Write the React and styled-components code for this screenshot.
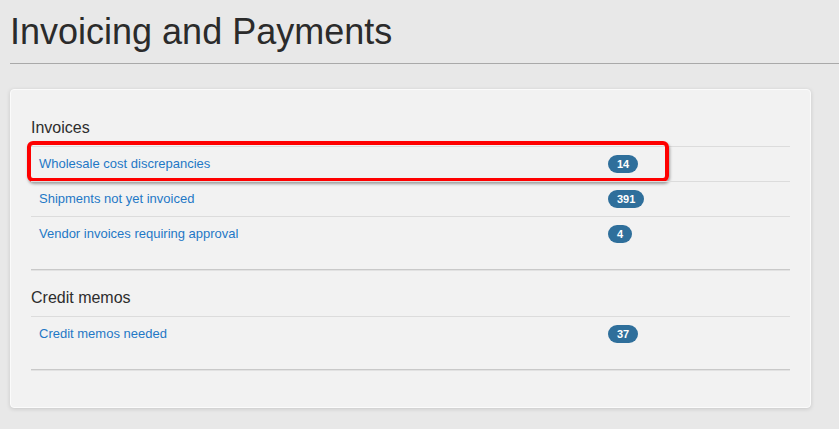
import React from 'react'
import styled, {createGlobalStyle} from 'styled-components'

const GlobalStyle = createGlobalStyle`
  html, body {
    margin: 0;
    padding: 0;
    background: #e8e8e8;
    font-family: "Liberation Sans", Arial, Helvetica, sans-serif;
  }
  * { box-sizing: border-box; }
`

// page pieces
const Page = styled.div`
  width: 839px;
  height: 429px;
  padding-left: 10px;
  overflow: hidden;
`
const Title = styled.h1`
  margin: 0;
  padding-top: 12px;
  font-size: 36px;
  line-height: 40px;
  font-weight: normal;
  color: #2b2b2b;
  letter-spacing: 0;
`
const TitleRule = styled.div`
  margin-top: 11px;
  border-top: 1px solid #a9a9a9;
`
const Card = styled.div`
  margin-top: 25px;
  width: 801px;
  padding: 11px 20px 36px;
  background: #f2f2f2;
  border: 1px solid #fbfbfb;
  border-radius: 4px;
  box-shadow: 0 1px 4px rgba(0, 0, 0, 0.14);
`
const SectionTitle = styled.h3`
  margin: 0;
  padding: 17px 0 8px;
  font-size: 16px;
  line-height: 20px;
  font-weight: normal;
  color: #2d2d2d;
`
const Row = styled.div`
  position: relative;
  display: grid;
  grid-template-columns: 569px 1fr;
  align-items: center;
  height: 35px;
  border-top: 1px solid #dcdcdc;
`
const Cell = styled.div`
  padding: 0 8px;
  display: flex;
  align-items: center;
`
const RowLink = styled.a`
  font-size: 13px;
  line-height: 16px;
  color: #1f78c6;
  text-decoration: none;
  cursor: pointer;
`
const Badge = styled.span`
  display: inline-flex;
  align-items: center;
  justify-content: center;
  height: 18px;
  padding: 0 9px;
  border-radius: 9px;
  background: #2f6f9b;
  color: #fff;
  font-size: 11px;
  font-weight: bold;
`
const Spacer = styled.div`
  height: 18px;
`
const SectionRule = styled.div`
  border-top: 1px solid #c9c9c9;
  border-bottom: 1px solid #e2e2e2;
`
const Highlight = styled.div`
  position: absolute;
  left: -4px;
  top: -6px;
  width: 642px;
  height: 41px;
  border: 4px solid #fe0000;
  border-radius: 6px;
  box-shadow: 1px 2px 3px rgba(0, 0, 0, 0.35);
  pointer-events: none;
`

const sections = [
  {
    name: 'Invoices',
    rows: [
      {label: 'Wholesale cost discrepancies', count: 14, marked: true},
      {label: 'Shipments not yet invoiced', count: 391},
      {label: 'Vendor invoices requiring approval', count: 4},
    ],
  },
  {
    name: 'Credit memos',
    rows: [{label: 'Credit memos needed', count: 37}],
  },
]

const App = () => {
  return (
    <Page>
      <GlobalStyle />
      <Title>Invoicing and Payments</Title>
      <TitleRule />
      <Card>
        {sections.map((section) => (
          <div key={section.name}>
            <SectionTitle>{section.name}</SectionTitle>
            {section.rows.map((row) => (
              <Row key={row.label}>
                <Cell><RowLink>{row.label}</RowLink></Cell>
                <Cell><Badge>{row.count}</Badge></Cell>
                {row.marked && <Highlight />}
              </Row>
            ))}
            <Spacer />
            <SectionRule />
          </div>
        ))}
      </Card>
    </Page>
  )
}

export default App
